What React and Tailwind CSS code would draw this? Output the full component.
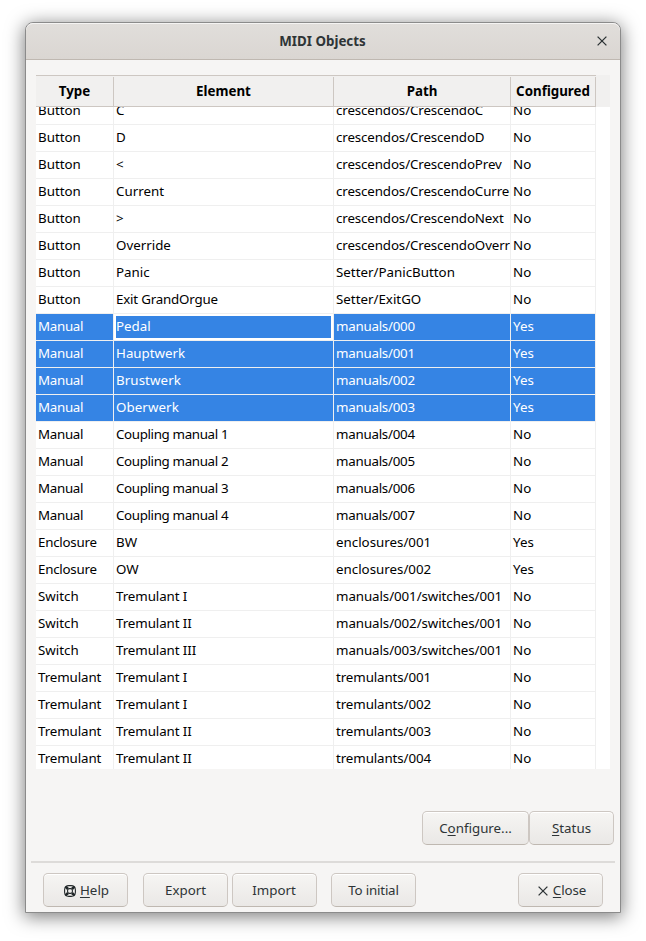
import React from "react";

const rows = [
  ["Button", "C", "crescendos/CrescendoC", "No"],
  ["Button", "D", "crescendos/CrescendoD", "No"],
  ["Button", "<", "crescendos/CrescendoPrev", "No"],
  ["Button", "Current", "crescendos/CrescendoCurrent", "No"],
  ["Button", ">", "crescendos/CrescendoNext", "No"],
  ["Button", "Override", "crescendos/CrescendoOverride", "No"],
  ["Button", "Panic", "Setter/PanicButton", "No"],
  ["Button", "Exit GrandOrgue", "Setter/ExitGO", "No"],
  ["Manual", "Pedal", "manuals/000", "Yes"],
  ["Manual", "Hauptwerk", "manuals/001", "Yes"],
  ["Manual", "Brustwerk", "manuals/002", "Yes"],
  ["Manual", "Oberwerk", "manuals/003", "Yes"],
  ["Manual", "Coupling manual 1", "manuals/004", "No"],
  ["Manual", "Coupling manual 2", "manuals/005", "No"],
  ["Manual", "Coupling manual 3", "manuals/006", "No"],
  ["Manual", "Coupling manual 4", "manuals/007", "No"],
  ["Enclosure", "BW", "enclosures/001", "Yes"],
  ["Enclosure", "OW", "enclosures/002", "Yes"],
  ["Switch", "Tremulant I", "manuals/001/switches/001", "No"],
  ["Switch", "Tremulant II", "manuals/002/switches/001", "No"],
  ["Switch", "Tremulant III", "manuals/003/switches/001", "No"],
  ["Tremulant", "Tremulant I", "tremulants/001", "No"],
  ["Tremulant", "Tremulant I", "tremulants/002", "No"],
  ["Tremulant", "Tremulant II", "tremulants/003", "No"],
  ["Tremulant", "Tremulant II", "tremulants/004", "No"],
];

const SELECTED_FIRST = 8;
const SELECTED_LAST = 11;
const grid = "grid grid-cols-[78px_220px_177px_85px]";

// Letter spacing by the first word of a cell.
function tracking(text) {
  if (text.startsWith("Coupling")) return "tracking-[-0.35px]";
  if (text.startsWith("Manual")) return "tracking-[-0.3px]";
  if (text.startsWith("manuals/") && text.length < 12) return "tracking-[-0.25px]";
  if (text.startsWith("manuals/")) return "tracking-[-0.08px]";
  if (text.startsWith("Exit")) return "tracking-[-0.2px]";
  if (text.startsWith("Tremulant ")) return "tracking-[-0.08px]";
  if (text.startsWith("Tremulant") || text.startsWith("tremulants")) return "tracking-[-0.1px]";
  if (text.startsWith("crescendos")) return "tracking-[-0.12px]";
  if (text.startsWith("Enclosure")) return "tracking-[-0.25px]";
  if (text === "Brustwerk" || text === "Oberwerk") return "tracking-[0.08px]";
  return "tracking-normal";
}

function CloseIcon() {
  return (
    <svg width="10" height="10" viewBox="0 0 10 10" className="shrink-0">
      <path d="M0.6 0.6L9.4 9.4M9.4 0.6L0.6 9.4" stroke="#2e3436" strokeWidth="1.3" fill="none" />
    </svg>
  );
}

function HelpIcon() {
  return (
    <svg width="12" height="12" viewBox="0 0 12 12" className="shrink-0" fill="none" stroke="#22282a">
      <rect x="0.6" y="0.6" width="10.8" height="10.8" rx="4.2" strokeWidth="1.1" />
      <rect x="3.6" y="3.6" width="4.8" height="4.8" rx="1.8" strokeWidth="1.1" />
      <path d="M1.3 1.3L4 4M10.7 1.3L8 4M1.3 10.7L4 8M10.7 10.7L8 8" strokeWidth="2.6" />
    </svg>
  );
}

function Button({ className, children }) {
  return (
    <button
      className={
        "flex h-[34px] shrink-0 items-center justify-center rounded-[5px] border border-[#cdc7c2] border-b-[#bfb8b1] bg-linear-to-b from-[#f6f5f3] to-[#eae8e6] pt-[2px] text-[#2e3436] shadow-[inset_0_1px_0_#ffffff] " +
        className
      }
    >
      {children}
    </button>
  );
}

function Key({ children }) {
  return <span className="underline decoration-1 underline-offset-2 [text-decoration-skip-ink:none]">{children}</span>;
}

function Row({ cells, index }) {
  const selected = index >= SELECTED_FIRST && index <= SELECTED_LAST;
  return (
    <div className={grid + " h-[27px] w-[560px] shrink-0"}>
      {cells.map((text, col) => (
        <div
          key={col}
          className={
            "overflow-hidden border-r border-b border-[#efefef] pl-[2px] leading-[24px] whitespace-nowrap " +
            (selected ? "bg-[#3584e4] bg-clip-padding text-white " : "text-black ") +
            (index === SELECTED_FIRST && col === 1 ? "shadow-[inset_0_0_0_2px_#ffffff] " : "") +
            tracking(text)
          }
        >
          {text}
        </div>
      ))}
    </div>
  );
}

export default function App() {
  return (
    <div className="h-[941px] w-[646px] overflow-hidden bg-white pt-[22px] pl-[25px] font-['Noto_Sans',sans-serif] text-[13.333px]">
      <div className="flex h-[891px] w-[596px] flex-col overflow-hidden rounded-t-[8px] border border-[#8b8b8b] bg-[#f6f5f4] shadow-[0_3px_18px_1px_rgba(0,0,0,0.5)]">
        <header className="grid h-[37px] shrink-0 grid-cols-[36px_1fr_36px] items-center rounded-t-[7px] border-b border-[#bfb8b1] bg-linear-to-b from-[#e1dedb] to-[#dad6d2] shadow-[inset_0_1px_0_#f5f4f3]">
          <span />
          <h1 className="pt-[2px] pr-px text-center font-bold text-[#2e3436]">MIDI Objects</h1>
          <span className="flex justify-center">
            <CloseIcon />
          </span>
        </header>

        <main className="mt-[15px] ml-[10px] flex h-[694px] w-[574px] shrink-0 flex-col overflow-hidden bg-white">
          <div className="h-8 shrink-0 bg-[#f1f0ef]">
            <div className={grid + " h-8 w-[560px] border-y border-[#cdc7c2] pt-px font-bold text-black"}>
              {["Type", "Element", "Path", "Configured"].map((h) => (
                <div key={h} className="flex items-center justify-center border-r border-[#cdc7c2]">
                  {h}
                </div>
              ))}
            </div>
          </div>
          <div className="flex min-h-0 grow flex-col justify-start overflow-hidden">
            <div className="-mt-[9px] flex shrink-0 flex-col">
              {rows.map((cells, i) => (
                <Row key={i} cells={cells} index={i} />
              ))}
            </div>
          </div>
        </main>

        <div className="mt-[42px] mr-[6px] flex shrink-0 justify-end">
          <Button className="w-[107px]">
            <span>C<Key>o</Key>nfigure...</span>
          </Button>
          <Button className="w-[85px]">
            <span><Key>S</Key>tatus</span>
          </Button>
        </div>

        <div className="mx-[5px] mt-4 h-[2px] shrink-0 bg-[#dddbd9]" />

        <footer className="mt-[10px] flex shrink-0 pl-[17px]">
          <Button className="w-[85px] gap-1 pl-[2px]">
            <HelpIcon />
            <span><Key>H</Key>elp</span>
          </Button>
          <Button className="ml-[15px] w-[85px]">Export</Button>
          <Button className="ml-1 w-[85px] pr-px">Import</Button>
          <Button className="ml-[14px] w-[85px] tracking-[-0.2px]">To initial</Button>
          <Button className="ml-[102px] w-[85px] gap-[5px] pl-[3px]">
            <CloseIcon />
            <span className="tracking-[-0.1px]"><Key>C</Key>lose</span>
          </Button>
        </footer>
      </div>
    </div>
  );
}
